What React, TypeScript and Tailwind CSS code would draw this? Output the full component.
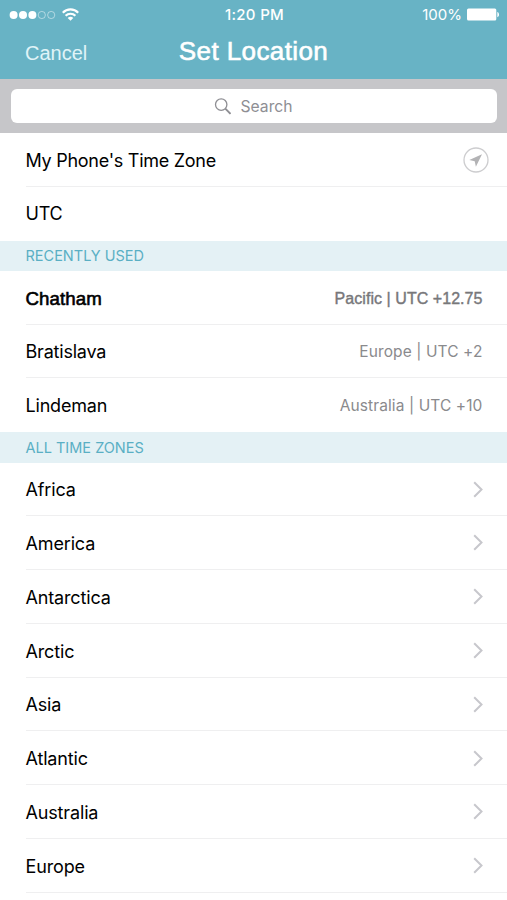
import { ReactNode } from "react";

const recent = [
  { name: "Chatham", detail: "Pacific | UTC +12.75", selected: true },
  { name: "Bratislava", detail: "Europe | UTC +2" },
  { name: "Lindeman", detail: "Australia | UTC +10" },
];

const regions = ["Africa", "America", "Antarctica", "Arctic", "Asia", "Atlantic", "Australia", "Europe"];

const StatusBar = () => (
  <div className="flex items-center justify-between h-[29px] pl-[9px] pr-[7px] text-[15px] font-medium">
    <div className="flex flex-1 items-center">
      <svg width="47" height="10" viewBox="0 0 47 10" fill="#fff">
        <circle cx="4.6" cy="5" r="4" />
        <circle cx="14" cy="5" r="4" />
        <circle cx="23.4" cy="5" r="4" />
        <g fill="none" stroke="#fff" strokeOpacity="0.6" strokeWidth="0.8">
          <circle cx="32.8" cy="5" r="3.6" />
          <circle cx="42.2" cy="5" r="3.6" />
        </g>
      </svg>
      <svg className="ml-1.5" width="17" height="13" viewBox="0 0 17 13" fill="none" stroke="#fff" strokeWidth="2.2">
        <path d="M.8 4.7a10.8 10.8 0 0 1 15.4 0" />
        <path d="M3.6 7.8a6.9 6.9 0 0 1 9.8 0" />
        <path d="M8.5 12.8 5.7 9.9a3.9 3.9 0 0 1 5.6 0z" fill="#fff" stroke="none" />
      </svg>
    </div>
    <span className="pt-0.5 tracking-[0.3px]">1:20 PM</span>
    <div className="flex flex-1 items-center justify-end">
      <span className="pt-0.5 font-normal">100%</span>
      <svg className="ml-1" width="34" height="13" viewBox="0 0 34 13" fill="#fff">
        <rect x="1" y="0.5" width="29.3" height="12" rx="1.5" />
        <path d="M31.3 4c2.3.6 2.3 4.6 0 5.2z" />
      </svg>
    </div>
  </div>
);

const SectionHeader = ({ children }: { children: ReactNode }) => (
  <h2 className="flex items-center h-[30.4px] pl-[25.5px] bg-[#e4f1f5] text-[#5aafc4] text-[14.5px]">
    {children}
  </h2>
);

const Row = ({ children, last = false }: { children: ReactNode; last?: boolean }) => (
  <li className="h-[53.78px] pl-[25.5px]">
    <div className={`flex items-center justify-between h-full pt-[1.5px] pr-[24.5px] border-b ${last ? "border-transparent" : "border-[#efeff0]"}`}>
      {children}
    </div>
  </li>
);

const App = () => {
  return (
    <div className="w-full h-[900px] overflow-hidden bg-white text-black text-[18px] font-[Inter,sans-serif]">

      {/* Header */}
      <header className="h-[79.3px] bg-[#68b3c5] text-white">
        <StatusBar />
        <div className="grid grid-cols-[1fr_auto_1fr] items-center h-[45px] font-['Liberation_Sans',sans-serif]">
          <button className="justify-self-start pl-[25px] pt-0.5 text-[20px] text-[#e0f4f8]">Cancel</button>
          <h1 className="text-[26px] tracking-[0.4px] [-webkit-text-stroke:0.6px_white]">Set Location</h1>
        </div>
      </header>

      {/* Search */}
      <div className="h-[53.7px] px-[10.5px] pt-[9.5px] bg-[#c6c6c9]">
        <div className="flex items-center justify-center h-[34.5px] pt-px rounded-[6px] bg-white text-[#8e8e93] text-[15.7px]">
          <svg className="mr-[9px]" width="17" height="17" viewBox="0 0 17 17" fill="none" stroke="#8e8e93">
            <circle cx="7.2" cy="6.6" r="5.7" strokeWidth="1.3" />
            <path d="m11.3 10.7 5.2 5.2" strokeWidth="1.9" />
          </svg>
          <span>Search</span>
        </div>
      </div>

      <ul>
        <Row>
          <span className="tracking-[-0.27px]">My Phone's Time Zone</span>
          <svg className="-mr-[6.5px]" width="26" height="26" viewBox="0 0 26 26">
            <circle cx="13" cy="13" r="12" fill="none" stroke="#cdcdcf" strokeWidth="1.3" />
            <path d="M19 7.3 6.3 12.9l5.4 1.3 1.2 5.5z" fill="#b3b3b5" />
          </svg>
        </Row>
        <Row last>
          <span className="tracking-[-0.2px]">UTC</span>
        </Row>
      </ul>

      <SectionHeader>RECENTLY USED</SectionHeader>
      <ul>
        {recent.map((zone, index) => (
          <Row key={zone.name} last={index === recent.length - 1}>
            {zone.selected ? (
              <>
                <span className="pt-0.5 font-['Liberation_Sans',sans-serif] text-[18.7px] tracking-[0.1px] [-webkit-text-stroke:0.6px_black]">{zone.name}</span>
                <span className="pt-0.5 font-['Liberation_Sans',sans-serif] text-[16px] tracking-[0.05px] text-[#77777a] [-webkit-text-stroke:0.4px_#77777a]">{zone.detail}</span>
              </>
            ) : (
              <>
                <span className="tracking-[-0.2px]">{zone.name}</span>
                <span className="text-[15.5px] tracking-[0.1px] text-[#8a8a8d]">{zone.detail}</span>
              </>
            )}
          </Row>
        ))}
      </ul>

      <SectionHeader>ALL TIME ZONES</SectionHeader>
      <ul>
        {regions.map((region) => (
          <Row key={region}>
            <span className="tracking-[-0.15px]">{region}</span>
            <svg className="-mt-px" width="10" height="17" viewBox="0 0 10 17" fill="none" stroke="#c7c7cc" strokeWidth="2">
              <path d="M1.2 1.2 8.5 8.5l-7.3 7.3" />
            </svg>
          </Row>
        ))}
      </ul>

    </div>
  );
};

export default App;
